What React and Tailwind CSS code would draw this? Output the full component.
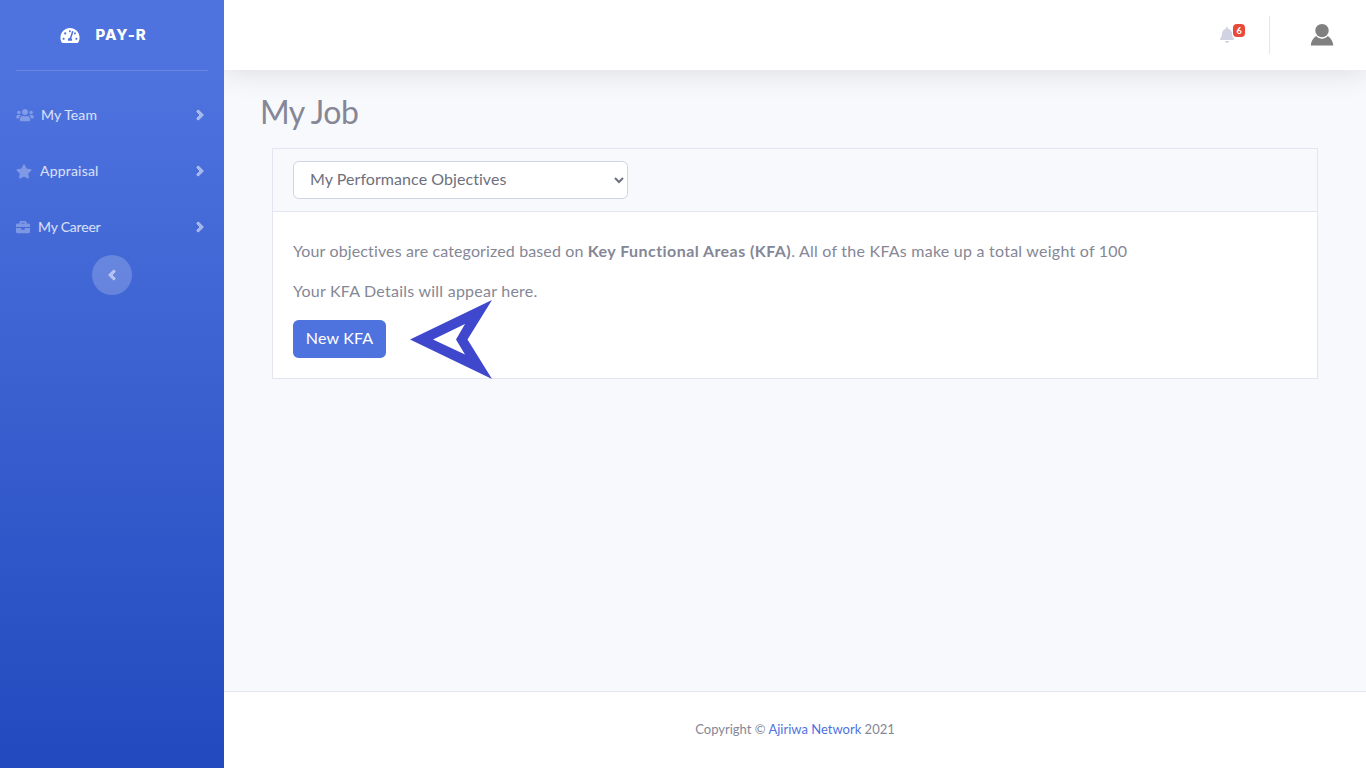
import { FaTachometerAlt, FaUsers, FaStar, FaBriefcase, FaAngleRight, FaAngleLeft, FaBell } from 'react-icons/fa';

const navItems = [
  { label: 'My Team', Icon: FaUsers, icon: 'h-[14px] w-[18px]', text: 'ml-[7px] pb-[2px] tracking-[0.1px]' },
  { label: 'Appraisal', Icon: FaStar, icon: 'h-[15px] w-[16px]', text: 'ml-[8px] pb-[2px] tracking-[0.2px]' },
  { label: 'My Career', Icon: FaBriefcase, icon: 'h-[14px] w-[14px]', text: 'ml-[8px] pb-[2px] tracking-[-0.2px]' },
];

function Sidebar() {
  return (
    <aside className="flex w-56 shrink-0 flex-col bg-[linear-gradient(180deg,#4e73df_10%,#224abe_100%)]">
      <div className="flex h-[70px] items-center pl-[60px] text-white">
        <FaTachometerAlt className="h-[17px] w-[20px]" />
        <span className="ml-[15.5px] pt-px font-[Inter,sans-serif] text-[15px] font-extrabold tracking-[1px]">PAY-R</span>
      </div>
      <hr className="mx-4 mb-4 border-white/15" />
      <nav>
        {navItems.map(({ label, Icon, icon, text }) => (
          <a key={label} className="flex h-14 items-center pl-4 pr-[19px] text-[14px] text-white/80">
            <Icon className={`${icon} text-white/30`} />
            <span className={text}>{label}</span>
            <FaAngleRight className="ml-auto h-[16px] w-[10px] text-white/50" stroke="currentColor" strokeWidth="24" />
          </a>
        ))}
      </nav>
      <button className="flex size-10 items-center justify-center self-center rounded-full bg-white/20 pr-px">
        <FaAngleLeft className="h-[16px] w-[10px] text-white/50" stroke="currentColor" strokeWidth="24" />
      </button>
    </aside>
  );
}

function Topbar() {
  return (
    <header className="z-10 flex h-[70px] shrink-0 items-center justify-end bg-white pr-8 shadow-[0_2.4px_28px_0_rgba(58,59,69,0.15)]">
      <div className="relative mr-[35px] text-[#d1d3e2]">
        <FaBell className="h-4 w-[14px]" />
        <span className="absolute -top-[3px] left-[13px] flex h-[13px] w-[12px] items-center justify-center rounded-[4px] bg-[#e74a3b] text-[9px] leading-none font-bold text-white">
          6
        </span>
      </div>
      <div className="h-[38px] w-px bg-[#e3e6f0]" />
      <svg className="ml-10 h-6 w-6" viewBox="0 0 24 24" fill="#808080">
        <path d="M.7 22.6C.9 18.6 3.2 15.2 6.2 13C8 14.9 9.8 15.7 12 15.7S16 14.9 17.8 13C20.8 15.2 23.1 18.6 23.3 22.6Z" />
        <circle cx="12" cy="7.7" r="7.6" fill="white" />
        <circle cx="12" cy="7.6" r="6.7" />
      </svg>
    </header>
  );
}

function ObjectivesCard() {
  return (
    <section className="relative ml-3 border border-[#e3e6f0] bg-white">
      <div className="border-b border-[#e3e6f0] bg-[#f8f9fc] px-5 py-3">
        <select className="block h-[38px] w-[335px] rounded-[5.6px] border border-[#d1d3e2] bg-white pl-3 pr-[13px] pt-[3px] pb-[7px] text-[16px] tracking-[0.06px] text-[#6e707e]">
          <option>My Performance Objectives</option>
        </select>
      </div>
      <div className="px-5 pb-5 pt-[27px] text-[16px] leading-6">
        <p className="mb-4 whitespace-nowrap tracking-[0.13px]">
          Your objectives are categorized based on <b className="font-bold tracking-[0.44px]">Key Functional Areas (KFA)</b>
          <span className="tracking-[0.24px]">. All of the KFAs make up a total weight of 100</span>
        </p>
        <p className="mb-[17px] tracking-[0.24px]">Your KFA Details will appear here.</p>
        <button className="block h-[38px] w-[93px] rounded-[5.6px] bg-[#4e73df] pb-[2px] tracking-[0.15px] text-white">New KFA</button>
      </div>
      <svg className="absolute left-[137px] top-[151px] h-[80px] w-[83px]" viewBox="0 0 83 80" fill="#3f48cc" fillRule="evenodd">
        <path d="M0 39.5L82 0L57.500 39.5L82 79ZM23 39.5L55 54.5L46 39.5L55 24Z" />
      </svg>
    </section>
  );
}

export default function App() {
  return (
    <div className="flex h-screen overflow-hidden bg-[#f8f9fc] font-[Lato,'Open_Sans',sans-serif] text-[#858796]">
      <Sidebar />
      <div className="flex min-w-0 flex-1 flex-col overflow-hidden">
        <Topbar />
        <main className="flex-1 pl-9 pr-12 pt-[22px]">
          <h1 className="mb-[17px] text-[32px] leading-[39px] font-normal tracking-[-0.5px]">My Job</h1>
          <ObjectivesCard />
        </main>
        <footer className="flex h-[77px] items-center justify-center border-t border-[#e3e6f0] bg-white pb-[2px] text-[13px] leading-none">
          <span>
            Copyright © <a className="text-[#4e73df]">Ajiriwa Network</a> 2021
          </span>
        </footer>
      </div>
    </div>
  );
}
